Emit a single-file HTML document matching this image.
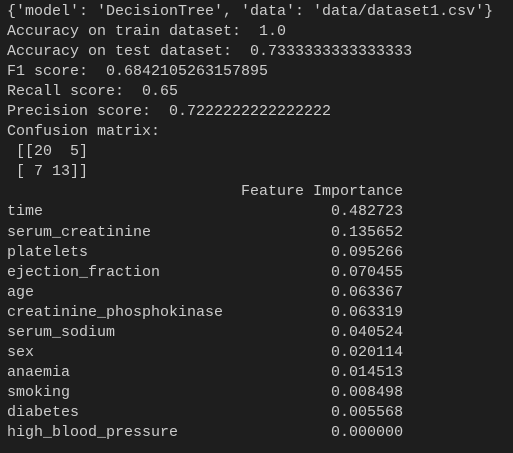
<!DOCTYPE html>
<html><head><style>
html,body{margin:0;padding:0;background:#1e1e1e;width:513px;height:453px;overflow:hidden}
pre{margin:0;position:absolute;left:7px;top:2px;font-family:"Liberation Mono",monospace;font-size:15px;line-height:20.05px;color:#cccccc}
</style></head><body>
<pre>{'model': 'DecisionTree', 'data': 'data/dataset1.csv'}
Accuracy on train dataset:  1.0
Accuracy on test dataset:  0.7333333333333333
F1 score:  0.6842105263157895
Recall score:  0.65
Precision score:  0.7222222222222222
Confusion matrix:
 [[20  5]
 [ 7 13]]
                          Feature Importance
time                                0.482723
serum_creatinine                    0.135652
platelets                           0.095266
ejection_fraction                   0.070455
age                                 0.063367
creatinine_phosphokinase            0.063319
serum_sodium                        0.040524
sex                                 0.020114
anaemia                             0.014513
smoking                             0.008498
diabetes                            0.005568
high_blood_pressure                 0.000000</pre>
</body></html>
